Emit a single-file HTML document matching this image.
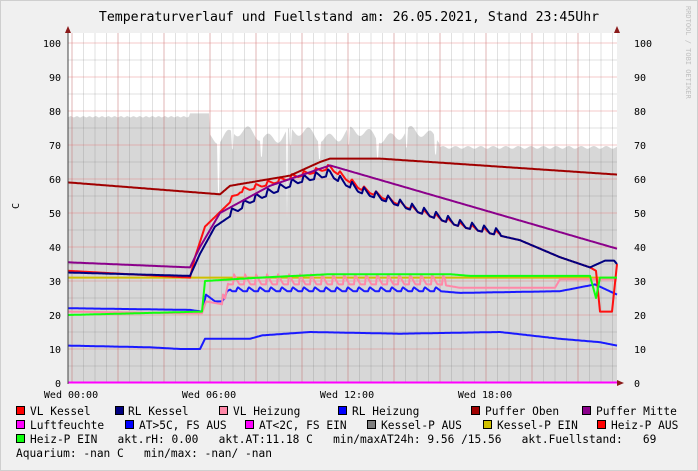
<!DOCTYPE html><html><head><meta charset="utf-8"><style>
body{margin:0;background:#f0f0f0;width:698px;height:471px;overflow:hidden}
svg{display:block}
text{font-family:"DejaVu Sans Mono","Liberation Mono",monospace;fill:#000;white-space:pre}
</style></head><body>
<svg id="s" width="698" height="471" viewBox="0 0 698 471" xml:space="preserve">
<rect x="0" y="0" width="698" height="471" fill="#f0f0f0"/>
<rect x="0.5" y="0.5" width="697" height="470" fill="none" stroke="#cfcfcf"/>
<rect x="68" y="33" width="549" height="350" fill="#fff"/>
<g id="area"></g><g id="grid"></g><g id="lines"></g>
<text x="349" y="21" font-size="13.2" text-anchor="middle">Temperaturverlauf und Fuellstand am: 26.05.2021, Stand 23:45Uhr</text>
<text x="16" y="212" font-size="10" transform="rotate(-90 16 209)">C</text>
<text x="686" y="6" font-size="7" style="fill:#c0c0c0" transform="rotate(90 686 6)">RRDTOOL / TOBI OETIKER</text>
<g id="axes" font-size="10"></g>
<g font-size="11.2">
<text x="30" y="415">VL Kessel</text><text x="128" y="415">RL Kessel</text><text x="233" y="415">VL Heizung</text><text x="352" y="415">RL Heizung</text><text x="485" y="415">Puffer Oben</text><text x="596" y="415">Puffer Mitte</text>
<text x="30" y="429">Luftfeuchte</text><text x="139" y="429">AT&gt;5C, FS AUS</text><text x="259" y="429">AT&lt;2C, FS EIN</text><text x="381" y="429">Kessel-P AUS</text><text x="497" y="429">Kessel-P EIN</text><text x="611" y="429">Heiz-P AUS</text>
<text x="30" y="443">Heiz-P EIN   akt.rH: 0.00   akt.AT:11.18 C   min/maxAT24h: 9.56 /15.56   akt.Fuellstand:   69</text>
<text x="16" y="457">Aquarium: -nan C   min/max: -nan/ -nan</text>
</g>
<g id="boxes"></g>
</svg>
<script>
const NS="http://www.w3.org/2000/svg",Y=v=>383-3.4*v;
function el(p,t,a){const e=document.createElementNS(NS,t);for(const k in a)e.setAttribute(k,a[k]);document.getElementById(p).appendChild(e);return e}
for(let x=72;x<617;x+=11.5){el("grid","line",{x1:x,y1:33,x2:x,y2:383,stroke:"rgba(120,120,120,.22)","stroke-width":1})}
for(let v=5;v<=100;v+=10){el("grid","line",{x1:68,y1:Y(v),x2:617,y2:Y(v),stroke:"rgba(120,120,120,.22)"})}
for(let v=10;v<=100;v+=10){el("grid","line",{x1:68,y1:Y(v),x2:617,y2:Y(v),stroke:"rgba(230,100,100,.35)"})}
for(let x=72;x<617;x+=46){el("grid","line",{x1:x,y1:33,x2:x,y2:383,stroke:"rgba(230,100,100,.35)"})}
for(let v=0;v<=100;v+=10){el("axes","text",{x:61,y:Y(v)+4,"text-anchor":"end"}).textContent=v;el("axes","text",{x:634,y:Y(v)+4}).textContent=v}
[["Wed 00:00",71],["Wed 06:00",209],["Wed 12:00",347],["Wed 18:00",485]].forEach(a=>el("axes","text",{x:a[1],y:398,"text-anchor":"middle"}).textContent=a[0]);
el("axes","line",{x1:68,y1:28,x2:68,y2:384,stroke:"#444"});
el("axes","path",{d:"M65 33 L68 26 L71 33Z",fill:"#8b1a1a"});
el("axes","path",{d:"M614 33 L617 26 L620 33Z",fill:"#8b1a1a"});
el("axes","path",{d:"M617 380 L624 383 L617 386Z",fill:"#8b1a1a"});
function pw(pts,saw,amp,per,sh){sh=sh||0.15;let s="";for(let x=68;x<=617;x++){let i=0;while(i<pts.length-2&&x>pts[i+1][0])i++;const[a,b]=[pts[i],pts[i+1]];let t=(x-a[0])/(b[0]-a[0]);t=Math.max(0,Math.min(1,t));let v=a[1]+(b[1]-a[1])*t;if(saw&&x>=saw[0]&&x<=saw[1]){const ph=((x-saw[0])%per)/per;v+=amp*(ph<sh?ph/sh:Math.max(0,1-(ph-sh)/(0.5)))}s+=x+","+Y(v).toFixed(1)+" "}return s}
let a="68,383 ";for(let x=68;x<=617;x++){let v;if(x<190)v=78.3+Math.sin(x)*0.2;else if(x<210)v=79.3;else if(x<440)v=73+1.5*Math.sin(x*.31)+1.2*Math.sin(x*.11)-(x%29<2?5:0);else v=69.3+0.4*Math.sin(x*.5);if(x==218||x==219)v=56;if(x==287)v=48;a+=x+","+Y(v).toFixed(1)+" "}a+="617,383";
el("area","polygon",{points:a,fill:"#d7d7d7"});
const L=(p,c,w)=>el("lines","polyline",{points:p,fill:"none",stroke:c,"stroke-width":w||2,"stroke-linejoin":"round"});
L(pw([[68,31],[200,31],[205,31],[600,31],[617,31]]),"#d0c000");
L(pw([[68,11],[150,10.5],[180,10],[200,10],[205,13],[250,13],[262,14],[310,15],[400,14.5],[500,15],[560,13],[600,12],[617,11]]),"#1a1aff");
L(pw([[68,22],[190,21.5],[202,21],[206,26],[215,24],[222,24],[230,27],[330,27],[440,27],[460,26.5],[560,27],[595,29],[617,26]],[225,440],1.2,11),"#1a1aff");
L(pw([[68,21],[190,20.5],[202,20.5],[206,24],[225,23],[228,29],[330,29],[440,29],[460,28],[555,28],[560,30.5],[617,30.5]],[222,445],3,11,0.08),"#ff88a8");
L(pw([[68,33],[190,31],[195,37],[205,46],[240,56],[290,60],[330,63],[340,61],[360,57],[420,50],[460,46],[520,42],[560,37],[590,34],[596,33],[600,21],[612,21],[617,35]],[230,500],1.3,12),"#ff1010");
L(pw([[68,32.5],[190,31.5],[200,38],[215,46],[250,53],[300,59],[330,61],[340,59],[360,56],[420,50],[460,46],[520,42],[560,37],[590,34],[605,36],[614,36],[617,35]],[230,500],2,12),"#000080");
L(pw([[68,35.5],[190,34],[200,40],[220,50],[270,58],[330,64],[617,39.5]]),"#8b008b");
L(pw([[68,59],[220,55.5],[230,58],[290,61],[320,65],[330,66],[380,66],[617,61.3]]),"#a00000");
L(pw([[68,20],[202,21],[205,30],[260,31],[330,32],[450,32],[470,31.5],[590,31.5],[596,25],[600,31],[617,31]]),"#10ff10");
L("68,382.5 617,382.5","#ff00ff",2);
[[16,411,"#ff0000"],[115,411,"#000080"],[219,411,"#ff88a8"],[338,411,"#0000ff"],[471,411,"#a00000"],[582,411,"#8b008b"],
[16,425,"#ff00ff"],[125,425,"#0000ff"],[245,425,"#ff00ff"],[367,425,"#808080"],[483,425,"#d0c000"],[597,425,"#ff0000"],[16,439,"#10ff10"]]
.forEach(b=>el("boxes","rect",{x:b[0]+.5,y:b[1]-4.5,width:8,height:8,fill:b[2],stroke:"#000"}));
</script>
</body></html>
